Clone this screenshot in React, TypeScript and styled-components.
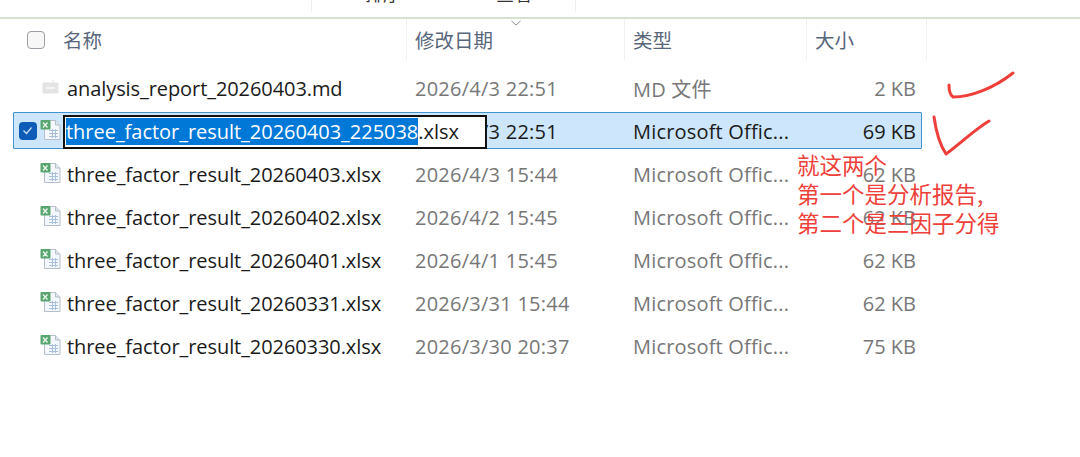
import React from "react";
import styled, { createGlobalStyle } from "styled-components";

interface FileRow {
  name: string;
  date: string;
  type: string;
  size: string;
  md?: boolean;
  selected?: boolean;
}

const rows: FileRow[] = [
  { name: "analysis_report_20260403.md", date: "2026/4/3 22:51", type: "MD 文件", size: "2 KB", md: true },
  { name: "three_factor_result_20260403_225038.xlsx", date: "2026/4/3 22:51", type: "Microsoft Offic...", size: "69 KB", selected: true },
  { name: "three_factor_result_20260403.xlsx", date: "2026/4/3 15:44", type: "Microsoft Offic...", size: "62 KB" },
  { name: "three_factor_result_20260402.xlsx", date: "2026/4/2 15:45", type: "Microsoft Offic...", size: "62 KB" },
  { name: "three_factor_result_20260401.xlsx", date: "2026/4/1 15:45", type: "Microsoft Offic...", size: "62 KB" },
  { name: "three_factor_result_20260331.xlsx", date: "2026/3/31 15:44", type: "Microsoft Offic...", size: "62 KB" },
  { name: "three_factor_result_20260330.xlsx", date: "2026/3/30 20:37", type: "Microsoft Offic...", size: "75 KB" },
];

function ExcelIcon() {
  return (
    <svg width="22" height="22" viewBox="0 0 22 22">
      <path d="M4.5 1.5h11l4.5 4.5v14.5H4.5z" fill="#f4f7fb" stroke="#b4bfca" />
      <path d="M15.5 1.5V6H20" fill="#dfe6ee" stroke="#b4bfca" />
      <path d="M9 11.5h9M9 14.5h9M9 17.5h9M12.5 10v9M15.5 10v9" stroke="#a9c0dc" fill="none" />
      <rect x="0.5" y="1" width="10" height="9.5" rx="1" fill="#58a570" />
      <path d="M3 3.5l4.5 5M7.5 3.5L3 8.5" stroke="#e8f5ea" strokeWidth="1.4" fill="none" />
    </svg>
  );
}

function MdIcon() {
  return (
    <svg width="22" height="22" viewBox="0 0 22 22">
      <path d="M12 3l3 3h-3z" fill="#eeeeee" />
      <rect x="2.5" y="6.5" width="16" height="11" rx="1" fill="#e4e4e4" />
      <path d="M6 12h9" stroke="#f4f4f4" strokeWidth="2" />
    </svg>
  );
}

export default function App() {
  return (
    <>
      <GlobalStyle />
      <Page>
        <TopBar>
          <TopTabs>
            <TopLabel>排序</TopLabel>
            <TopLabel>查看</TopLabel>
          </TopTabs>
        </TopBar>
        <HeaderRow>
          <NameHead>
            <HeadCheck />
            <HeadText>名称</HeadText>
          </NameHead>
          <HeadCell>
            <SortCaret viewBox="0 0 12 6">
              <path d="M1.5 1l4.5 4 4.5-4" fill="none" stroke="#8a8f96" />
            </SortCaret>
            <HeadText>修改日期</HeadText>
          </HeadCell>
          <TypeHead>
            <HeadText>类型</HeadText>
          </TypeHead>
          <SizeHead>
            <HeadText>大小</HeadText>
          </SizeHead>
        </HeaderRow>
        <List>
          {rows.map((row) => (
            <Row key={row.name} $selected={row.selected}>
              <CheckSlot>
                {row.selected && (
                  <RowCheck>
                    <svg width="11" height="9" viewBox="0 0 11 9">
                      <path d="M1.5 4.5l3 3 5-6" fill="none" stroke="#cfe4f7" strokeWidth="1.2" />
                    </svg>
                  </RowCheck>
                )}
              </CheckSlot>
              <IconSlot>{row.md ? <MdIcon /> : <ExcelIcon />}</IconSlot>
              {row.selected ? (
                <RenameBox>
                  <RenameMark>three_factor_result_20260403_225038</RenameMark>.xlsx
                </RenameBox>
              ) : (
                <NameText>{row.name}</NameText>
              )}
              <DateCell $selected={row.selected}>{row.date}</DateCell>
              <TypeCell $selected={row.selected}>{row.type}</TypeCell>
              <SizeCell $selected={row.selected}>{row.size}</SizeCell>
            </Row>
          ))}
        </List>

        <Strokes viewBox="0 0 1080 457">
          <path d="M949 85c0 6 1 10 4 12 18 0 41-9 60-24" />
          <path d="M934 117c2 14 6 28 12 37 14-10 28-24 43-33" />
        </Strokes>
        <Note>
          就这两个
          <br />
          第一个是分析报告,
          <br />
          第二个是三因子分得
        </Note>
      </Page>
    </>
  );
}

const GlobalStyle = createGlobalStyle`
  html, body {
    margin: 0;
    padding: 0;
    background: #ffffff;
  }
`;

const Page = styled.div`
  position: relative;
  width: 1080px;
  height: 457px;
  overflow: hidden;
  background: #ffffff;
  font-family: "Open Sans", "Noto Sans CJK SC", sans-serif;
`;

const TopBar = styled.div`
  height: 17px;
  border-bottom: 2px solid #d5e2cd;
  padding-left: 311px;
  overflow: hidden;
`;

const TopTabs = styled.div`
  width: 265px;
  height: 12px;
  border-left: 1px solid #eeeeee;
  border-right: 1px solid #eeeeee;
  display: flex;
  gap: 95px;
  padding-left: 53px;
  box-sizing: border-box;
`;

const TopLabel = styled.span`
  font-size: 18px;
  line-height: 18px;
  margin-top: -15px;
  color: #333333;
`;

const HeaderRow = styled.div`
  display: flex;
  height: 41px;
  padding-left: 27px;
`;

const HeadCell = styled.div`
  position: relative;
  width: 218px;
  display: flex;
  align-items: center;
  padding-left: 8px;
  box-sizing: border-box;
  border-left: 1px solid #f0f0f0;
`;

const TypeHead = styled(HeadCell)`
  width: 182px;
`;

const NameHead = styled.div`
  width: 379px;
  flex: none;
  display: flex;
  align-items: center;
  gap: 18px;
  box-sizing: border-box;
`;

const SizeHead = styled(HeadCell)`
  width: 121px;
  border-right: 1px solid #f0f0f0;
`;

const HeadCheck = styled.span`
  width: 18px;
  height: 18px;
  box-sizing: border-box;
  border: 1.5px solid #9a9da2;
  border-radius: 4px;
  background: #f7f7f7;
`;

const HeadText = styled.span`
  font-size: 19.5px;
  color: #57667a;
`;

const SortCaret = styled.svg`
  position: absolute;
  top: 1px;
  left: 103px;
  width: 12px;
  height: 6px;
`;

const List = styled.div`
  display: flex;
  flex-direction: column;
  gap: 6px;
  margin-top: 9px;
  padding-left: 13px;
`;

const Row = styled.div<{ $selected?: boolean }>`
  width: 909px;
  height: 37px;
  box-sizing: border-box;
  padding-top: 2px;
  display: flex;
  align-items: center;
  border: 1px solid ${(p) => (p.$selected ? "#3f93cf" : "transparent")};
  border-radius: 1px;
  background: ${(p) => (p.$selected ? "#cde6fb" : "transparent")};
`;

const CheckSlot = styled.div`
  width: 27px;
  flex: none;
  display: flex;
  justify-content: center;
`;

const RowCheck = styled.span`
  width: 18px;
  height: 18px;
  margin-top: -2px;
  border-radius: 4px;
  background: #0f5cb8;
  display: flex;
  align-items: center;
  justify-content: center;
`;

const IconSlot = styled.div`
  width: 27px;
  flex: none;
  display: flex;
  margin: -3px 0 0 -1px;
`;

const NameText = styled.div`
  width: 348px;
  flex: none;
  font-size: 20px;
  letter-spacing: -0.08px;
  color: #1a1a1a;
  white-space: nowrap;
`;

const RenameBox = styled.div`
  position: relative;
  z-index: 1;
  width: 424px;
  height: 34px;
  flex: none;
  margin-left: -4px;
  margin-right: -72px;
  box-sizing: border-box;
  border: 2px solid #111111;
  background: #ffffff;
  font-size: 20px;
  letter-spacing: -0.03px;
  line-height: 26px;
  padding: 2px 0 0 1px;
  color: #1a1a1a;
  white-space: nowrap;
`;

const RenameMark = styled.span`
  background: #0078d7;
  color: #ffffff;
`;

const DateCell = styled.div<{ $selected?: boolean }>`
  width: 218px;
  flex: none;
  font-size: 20px;
  letter-spacing: 0.25px;
  color: ${(p) => (p.$selected ? "#1a1a1a" : "#777777")};
  white-space: nowrap;
`;

const TypeCell = styled.div<{ $selected?: boolean }>`
  width: 190px;
  flex: none;
  font-size: 20px;
  letter-spacing: 0.18px;
  color: ${(p) => (p.$selected ? "#1a1a1a" : "#777777")};
  white-space: nowrap;
`;

const SizeCell = styled.div<{ $selected?: boolean }>`
  width: 93px;
  flex: none;
  text-align: right;
  font-size: 20px;
  color: ${(p) => (p.$selected ? "#1a1a1a" : "#777777")};
  white-space: nowrap;
`;

const Strokes = styled.svg`
  position: absolute;
  inset: 0;
  width: 1080px;
  height: 457px;
  pointer-events: none;

  path {
    fill: none;
    stroke: #ee3f3a;
    stroke-width: 3;
    stroke-linecap: round;
    stroke-linejoin: round;
  }
`;

const Note = styled.div`
  position: absolute;
  left: 797px;
  top: 150px;
  font-family: "Noto Sans CJK SC", sans-serif;
  font-size: 22.5px;
  line-height: 29px;
  color: #ee3f3a;
  white-space: nowrap;
`;
